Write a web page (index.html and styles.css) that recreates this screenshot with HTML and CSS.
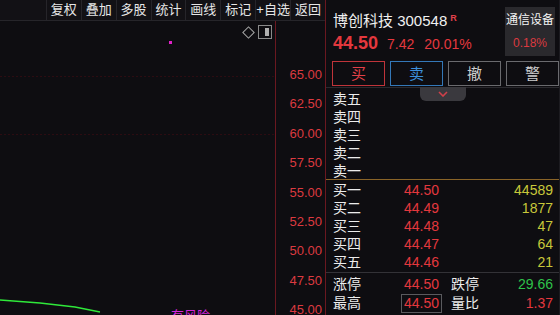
FILE: index.html
```html
<!DOCTYPE html>
<html lang="zh-CN">
<head>
    <meta charset="UTF-8">
    <title>博创科技 300548</title>
    <link rel="stylesheet" href="styles.css">
</head>
<body>
    <div class="app">
        <!-- K-line chart side -->
        <section class="chart">
            <div class="topline"></div>
            <div class="toolbar">
                <span class="tb-blank"></span>
                <span class="tb-btn">复权</span>
                <span class="tb-btn">叠加</span>
                <span class="tb-btn">多股</span>
                <span class="tb-btn">统计</span>
                <span class="tb-btn">画线</span>
                <span class="tb-btn">标记</span>
                <span class="tb-btn">+自选</span>
                <span class="tb-btn">返回</span>
            </div>
            <div class="chart-body">
                <div class="plot">
                    <svg class="plot-lines" width="275" height="292" viewBox="0 0 275 292">
                        <line x1="0" y1="55.5" x2="275" y2="55.5" stroke="#2c0c12" stroke-dasharray="2 2"/>
                        <line x1="0" y1="113.5" x2="275" y2="113.5" stroke="#2c0c12" stroke-dasharray="2 2"/>
                        <polyline points="0,279 40,282 75,286 100,291" fill="none" stroke="#2fe83a" stroke-width="1.3"/>
                    </svg>
                    <span class="icon-diamond"></span>
                    <span class="icon-panel"><i></i></span>
                    <span class="dot"></span>
                    <span class="risk">有风险</span>
                </div>
                <div class="axis">
                    <span>65.00</span>
                    <span>62.50</span>
                    <span>60.00</span>
                    <span>57.50</span>
                    <span>55.00</span>
                    <span>52.50</span>
                    <span>50.00</span>
                    <span>47.50</span>
                    <span>45.00</span>
                </div>
            </div>
        </section>

        <!-- quote panel -->
        <aside class="quote">
            <div class="quote-head">
                <div class="quote-main">
                    <div class="quote-name">博创科技 300548<sup>R</sup></div>
                    <div class="quote-price">
                        <b>44.50</b>
                        <span>7.42</span>
                        <span>20.01%</span>
                    </div>
                </div>
                <div class="sector">
                    <div class="sector-name">通信设备</div>
                    <div class="sector-chg">0.18%</div>
                </div>
            </div>

            <div class="actions">
                <span class="act act-buy">买</span>
                <span class="act act-sell">卖</span>
                <span class="act">撤</span>
                <span class="act">警</span>
            </div>

            <div class="book-sell">
                <span class="tab"><svg width="10" height="6" viewBox="0 0 10 6"><polyline points="1,1 5,5 9,1" fill="none" stroke="#d0404a" stroke-width="1.6"/></svg></span>
                <div class="row"><span class="lbl">卖五</span></div>
                <div class="row"><span class="lbl">卖四</span></div>
                <div class="row"><span class="lbl">卖三</span></div>
                <div class="row"><span class="lbl">卖二</span></div>
                <div class="row"><span class="lbl">卖一</span></div>
            </div>

            <div class="book-buy">
                <div class="row"><span class="lbl">买一</span><span class="px">44.50</span><span class="vol">44589</span></div>
                <div class="row"><span class="lbl">买二</span><span class="px">44.49</span><span class="vol">1877</span></div>
                <div class="row"><span class="lbl">买三</span><span class="px">44.48</span><span class="vol">47</span></div>
                <div class="row"><span class="lbl">买四</span><span class="px">44.47</span><span class="vol">64</span></div>
                <div class="row"><span class="lbl">买五</span><span class="px">44.46</span><span class="vol">21</span></div>
            </div>

            <div class="stats">
                <div class="srow"><span class="lbl">涨停</span><span class="px">44.50</span><span class="lbl">跌停</span><span class="val down">29.66</span></div>
                <div class="srow"><span class="lbl">最高</span><span class="px boxed">44.50</span><span class="lbl">量比</span><span class="val up">1.37</span></div>
            </div>
        </aside>
    </div>
</body>
</html>
```

FILE: styles.css
```css
body {
    margin: 0;
    width: 560px;
    height: 315px;
    overflow: hidden;
    background-color: #0e0d11;
    font-family: "Liberation Sans", "Noto Sans CJK SC", sans-serif;
    color: #e8e8e8;
}
.app {
    display: flex;
    height: 315px;
}

/* chart side */
.chart {
    width: 325px;
    border-right: 1px solid #6a1820;
    display: flex;
    flex-direction: column;
}
.topline {
    height: 2px;
    background-color: #b8121c;
}
.toolbar {
    display: flex;
    height: 20px;
    background-color: #121115;
    border-bottom: 1px solid #26252a;
}
.tb-blank {
    width: 46px;
    border-right: 1px solid #26252a;
}
.tb-btn {
    width: 34px;
    border-right: 1px solid #26252a;
    font-size: 13px;
    line-height: 20px;
    text-align: center;
    color: #e6e6e6;
}
.tb-btn:last-child {
    border-right: none;
}
.chart-body {
    flex: 1;
    display: flex;
}
.plot {
    position: relative;
    width: 275px;
    border-right: 1px solid #6a1820;
    overflow: hidden;
}
.plot-lines {
    display: block;
}
.icon-diamond {
    position: absolute;
    left: 244px;
    top: 7px;
    width: 7px;
    height: 7px;
    border: 1px solid #a8a8a8;
    transform: rotate(45deg);
}
.icon-panel {
    position: absolute;
    left: 258px;
    top: 4px;
    width: 12px;
    height: 12px;
    border: 1px solid #8a8a8a;
}
.icon-panel i {
    position: absolute;
    right: 2px;
    top: 2px;
    width: 4px;
    height: 8px;
    background-color: #b0b0b0;
}
.dot {
    position: absolute;
    left: 169px;
    top: 20px;
    width: 3px;
    height: 3px;
    background-color: #e020c8;
}
.risk {
    position: absolute;
    left: 171px;
    top: 284px;
    font-size: 13px;
    color: #d424d8;
}
.axis {
    flex: 1;
    display: flex;
    flex-direction: column;
    padding-top: 39px;
    padding-right: 3px;
}
.axis span {
    height: 29.4px;
    line-height: 29.4px;
    text-align: right;
    font-size: 13px;
    color: #dc3a40;
}

/* quote panel */
.quote {
    flex: 1;
    display: flex;
    flex-direction: column;
    border-right: 1px solid #1c1b20;
}
.quote-head {
    display: flex;
    height: 53px;
    padding: 7px 4px 0 7px;
}
.quote-main {
    flex: 1;
}
.quote-name {
    font-size: 15px;
    line-height: 20px;
    margin-top: 1px;
    color: #f0f0f0;
}
.quote-name sup {
    font-size: 9px;
    font-weight: bold;
    color: #e0404a;
    margin-left: 3px;
    vertical-align: 5px;
}
.quote-price {
    display: flex;
    align-items: baseline;
    gap: 9px;
    margin-top: 2px;
    color: #e4383e;
    font-size: 14px;
}
.quote-price b {
    font-size: 18px;
}
.quote-price span + span {
    margin-left: 1px;
}
.sector {
    width: 50px;
    height: 49px;
    background-color: #2a292d;
    text-align: center;
}
.sector-name {
    font-size: 12px;
    line-height: 14px;
    margin-top: 6px;
    color: #f4f4f4;
}
.sector-chg {
    font-size: 12px;
    margin-top: 9px;
    color: #dc3a40;
}
.actions {
    display: flex;
    gap: 5px;
    padding: 1px 0 0 6px;
    height: 26px;
    border-bottom: 1px solid #2a292e;
}
.act {
    width: 51px;
    height: 23px;
    border: 1px solid #6a6a6e;
    text-align: center;
    line-height: 23px;
    font-size: 15px;
    color: #cfcfcf;
}
.act-buy {
    border-color: #c0343a;
    color: #e04048;
}
.act-sell {
    border-color: #3478b8;
    color: #3c90dc;
}
.book-sell {
    position: relative;
    height: 89px;
    padding-top: 2px;
    border-bottom: 1px solid #8a6428;
}
.tab {
    position: absolute;
    left: 94px;
    top: -1px;
    width: 46px;
    height: 14px;
    background-color: #3a393e;
    border-radius: 0 0 6px 6px;
    display: flex;
    justify-content: center;
    align-items: center;
}
.row {
    display: grid;
    grid-template-columns: 68px 1fr auto;
    height: 18px;
    line-height: 18px;
    padding: 0 6px 0 7px;
    font-size: 14px;
}
.lbl {
    color: #ececec;
}
.px {
    color: #e4383e;
    padding: 0 2px;
    border: 1px solid transparent;
    line-height: 17px;
}
.vol {
    color: #c8c83a;
    text-align: right;
}
.book-buy {
    height: 91px;
    padding-top: 1px;
    border-bottom: 1px solid #333237;
}
.stats {
    padding-top: 2px;
}
.srow {
    display: grid;
    grid-template-columns: 68px 50px 1fr auto;
    height: 19px;
    line-height: 19px;
    padding: 0 6px 0 7px;
    font-size: 14px;
}
.srow .px {
    line-height: 17px;
    justify-self: start;
}
.boxed {
    border-color: #5a5a5e;
}
.val {
    text-align: right;
}
.down {
    color: #2ec24a;
}
.up {
    color: #e4383e;
}
```
